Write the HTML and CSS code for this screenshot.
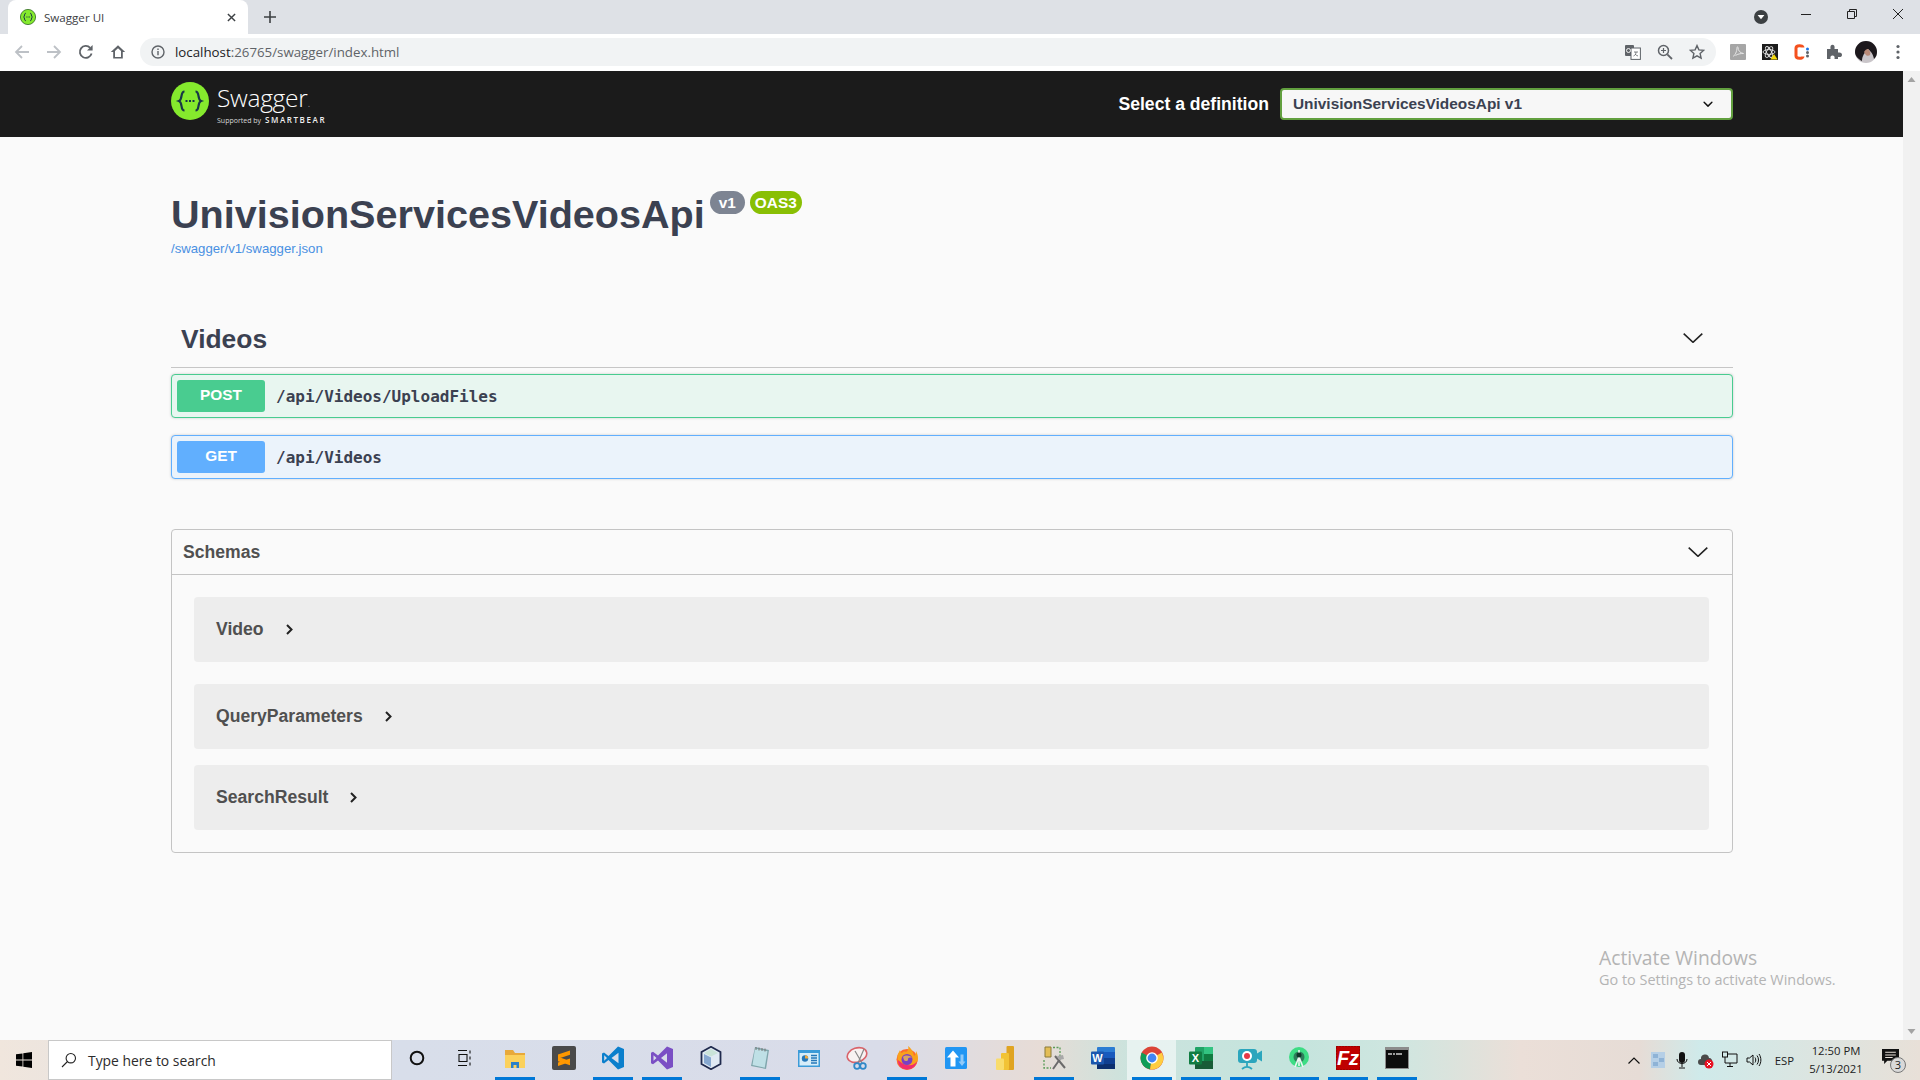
FILE: index.html
```html
<!DOCTYPE html>
<html lang="en">

<head>
    <meta charset="UTF-8">
    <title>Swagger UI</title>
    <link rel="stylesheet" href="styles.css">
</head>

<body>
    <!-- browser tabs -->
    <div class="tab-strip">
        <div class="tab">
            <svg class="tab-icon" viewBox="0 0 16 16">
                <circle cx="8" cy="8" r="7.6" fill="#85ea2d" stroke="#2f6b1e" stroke-width=".8" />
                <path d="M5.8 4.2C4 4.2 5 7.4 3.6 8 5 8.6 4 11.8 5.8 11.8M10.2 4.2C12 4.2 11 7.4 12.4 8 11 8.6 12 11.8 10.2 11.8" fill="none" stroke="#173647" stroke-width="1" />
                <path d="M6.4 8h.8M7.7 8h.8M9 8h.8" stroke="#173647" stroke-width="1" />
            </svg>
            <span class="tab-title">Swagger UI</span>
            <svg class="tab-close" viewBox="0 0 10 10"><path d="M1 1l8 8M9 1l-8 8" stroke="#3c4043" stroke-width="1.6" /></svg>
        </div>
        <svg class="new-tab" viewBox="0 0 12 12"><path d="M6 0v12M0 6h12" stroke="#3c4043" stroke-width="1.6" /></svg>
        <div class="window-controls">
            <span class="profile-menu"><svg viewBox="0 0 14 14"><circle cx="7" cy="7" r="7" fill="#3c4043" /><path d="M3.6 5h6.8L7 9.2z" fill="#fff" /></svg></span>
            <svg class="win-btn" viewBox="0 0 12 12"><path d="M1 6.5h10" stroke="#222" /></svg>
            <svg class="win-btn" viewBox="0 0 12 12"><path d="M1.5 3.5h7v7h-7zM3.5 3.5v-2h7v7h-2" fill="none" stroke="#222" /></svg>
            <svg class="win-btn" viewBox="0 0 12 12"><path d="M1 1l10 10M11 1L1 11" stroke="#222" /></svg>
        </div>
    </div>

    <!-- browser toolbar -->
    <div class="toolbar">
        <svg class="tool-icon" viewBox="0 0 16 16"><path d="M15 8H2M8 2L2 8l6 6" fill="none" stroke="#bdc1c6" stroke-width="1.8" /></svg>
        <svg class="tool-icon" viewBox="0 0 16 16"><path d="M1 8h13M8 2l6 6-6 6" fill="none" stroke="#bdc1c6" stroke-width="1.8" /></svg>
        <svg class="tool-icon" viewBox="0 0 16 16"><path d="M13.6 9.6A6 6 0 1 1 12.2 3.8" fill="none" stroke="#5f6368" stroke-width="1.8" /><path d="M14.6 1v5.6H9z" fill="#5f6368" /></svg>
        <svg class="tool-icon" viewBox="0 0 16 16"><path d="M8 1.2L.8 8h2.4v6.6h9.6V8h2.4zM5 13V7l3-2.8L11 7v6z" fill="#5f6368" /></svg>
        <div class="omnibox">
            <svg class="omni-info" viewBox="0 0 14 14"><circle cx="7" cy="7" r="6" fill="none" stroke="#5f6368" stroke-width="1.4" /><path d="M7 6v4.2M7 3.6v1.4" stroke="#5f6368" stroke-width="1.4" /></svg>
            <span class="url"><span class="url-host">localhost</span>:26765/swagger/index.html</span>
            <div class="omni-actions">
                <svg class="omni-icon" viewBox="0 0 16 16"><rect x="0" y="1" width="9" height="11" rx="1" fill="#5f6368" /><rect x="6" y="4" width="9.4" height="11.4" fill="#fff" stroke="#5f6368" /><path d="M9 8h4M11 8c0 2-1 3.500-2.500 4M10 10c.8 1 1.700 1.600 3 2" stroke="#5f6368" fill="none" stroke-width=".8" /><circle cx="3.500" cy="6.500" r="2" fill="none" stroke="#fff" stroke-width=".9" /></svg>
                <svg class="omni-icon" viewBox="0 0 16 16"><circle cx="6.500" cy="6.500" r="5" fill="none" stroke="#5f6368" stroke-width="1.500" /><path d="M10.300 10.300l4.700 4.700" stroke="#5f6368" stroke-width="1.800" /><path d="M4 6.500h5M6.500 4v5" stroke="#5f6368" stroke-width="1.200" /></svg>
                <svg class="omni-icon" viewBox="0 0 16 16"><path d="M8 1.600l1.900 4.300 4.700.5-3.500 3.100 1 4.600L8 11.800l-4.100 2.300 1-4.600L1.400 6.400l4.700-.5z" fill="none" stroke="#5f6368" stroke-width="1.400" /></svg>
            </div>
        </div>
        <div class="extensions">
            <svg class="ext-icon" viewBox="0 0 16 16"><rect width="16" height="16" rx="1" fill="#a6a6a6" /><path d="M3 12.500c2-1 4-5 4-9 0-1 1-1 1 0 0 3 2 5.500 5.500 6-3 0-6 .5-8 2" fill="none" stroke="#e6e6e6" stroke-width="1" /></svg>
            <svg class="ext-icon" viewBox="0 0 16 16"><rect width="16" height="16" fill="#1c1c1c" /><g fill="none" stroke="#e8e8e8" stroke-width=".9"><ellipse cx="7" cy="8" rx="6" ry="2.400" /><ellipse cx="7" cy="8" rx="6" ry="2.400" transform="rotate(60 7 8)" /><ellipse cx="7" cy="8" rx="6" ry="2.400" transform="rotate(120 7 8)" /></g><path d="M12 10l3.600 5.600H8.400z" fill="#f5d90a" /></svg>
            <svg class="ext-icon" viewBox="0 0 16 16"><path d="M9 3.500C9 1 2 1 2 4v8c0 3 7 3 7 .5" fill="none" stroke="#f4511e" stroke-width="3" /><circle cx="13.500" cy="5" r="1.500" fill="#1a73e8" /><circle cx="13.500" cy="8.500" r="1.500" fill="#5f6368" /><circle cx="13.500" cy="12" r="1.500" fill="#5f6368" /></svg>
            <svg class="ext-icon" viewBox="0 0 16 16"><path d="M1 5h3.500C4 2 5 .8 6.500.8S9 2 8.500 5H12v3.500c3-.5 4 .8 4 2.200s-1 2.800-4 2.300V15H8.500c.5-2.500-.5-3.500-2-3.500s-2.500 1-2 3.500H1z" fill="#5f6368" /></svg>
            <svg class="ext-avatar" viewBox="0 0 22 22"><circle cx="11" cy="11" r="11" fill="#c9c5c9" /><path d="M0 11A11 11 0 0 1 22 11c0 3-1 5-3 7-1-6-4-8-6-10-2 3-4 4-5 7-1 2-1 4-1 5-4-2-7-5-7-9z" fill="#1c181c" /><path d="M9 11c2-3 3-3 4-3 2 2 3 4 2 6-1 1-4 2-6-3z" fill="#b98a78" /></svg>
            <svg class="ext-menu" viewBox="0 0 4 16"><circle cx="2" cy="2.500" r="1.600" fill="#5f6368" /><circle cx="2" cy="8" r="1.600" fill="#5f6368" /><circle cx="2" cy="13.500" r="1.600" fill="#5f6368" /></svg>
        </div>
    </div>

    <div class="viewport">
        <main class="page">
            <!-- swagger header -->
            <header class="topbar">
                <div class="brand">
                    <svg class="brand-mark" viewBox="0 0 38 38">
                        <circle cx="19" cy="19" r="19" fill="#85ea2d" />
                        <path d="M13.500 9.500C9 9.500 12 17.500 8 19c4 1.500 1 9.500 5.500 9.500M24.500 9.500C29 9.500 26 17.500 30 19c-4 1.500-1 9.500-5.500 9.500" fill="none" stroke="#173647" stroke-width="2.200" />
                        <path d="M14.500 19h2M18 19h2M21.500 19h2" stroke="#173647" stroke-width="2" />
                    </svg>
                    <div class="brand-text">
                        <span class="brand-name">Swagger<span class="brand-dot">.</span></span>
                        <span class="brand-sub">Supported by <b>SMARTBEAR</b></span>
                    </div>
                </div>
                <div class="definition">
                    <span class="definition-label">Select a definition</span>
                    <div class="definition-select">
                        <span>UnivisionServicesVideosApi v1</span>
                        <svg class="select-arrow" viewBox="0 0 20 20"><path d="M13.418 7.859a.695.695 0 0 1 .978 0 .68.68 0 0 1 0 .969l-3.908 3.83a.697.697 0 0 1-.979 0l-3.908-3.83a.68.68 0 0 1 0-.969.695.695 0 0 1 .978 0L10 11z" fill="#111" /></svg>
                    </div>
                </div>
            </header>

            <div class="wrapper">
                <section class="info">
                    <div class="title-row">
                        <h1 class="title">UnivisionServicesVideosApi</h1>
                        <span class="badge badge-version">v1</span>
                        <span class="badge badge-oas">OAS3</span>
                    </div>
                    <a class="spec-link" href="#">/swagger/v1/swagger.json</a>
                </section>

                <section class="tag">
                    <div class="tag-head">
                        <h3>Videos</h3>
                        <svg class="tag-arrow" viewBox="0 0 20 10"><path d="M.7.700L10 9.300 19.300.700" fill="none" stroke="#222" stroke-width="1.600" /></svg>
                    </div>
                    <div class="opblock opblock-post">
                        <span class="method method-post">POST</span>
                        <span class="path">/api/Videos/UploadFiles</span>
                    </div>
                    <div class="opblock opblock-get">
                        <span class="method method-get">GET</span>
                        <span class="path">/api/Videos</span>
                    </div>
                </section>

                <section class="schemas">
                    <div class="schemas-head">
                        <h4>Schemas</h4>
                        <svg class="schemas-arrow" viewBox="0 0 20 10"><path d="M.7.700L10 9.300 19.300.700" fill="none" stroke="#222" stroke-width="1.600" /></svg>
                    </div>
                    <div class="models">
                        <div class="model model-first">
                            <span>Video</span>
                            <svg class="model-arrow" viewBox="0 0 7 11"><path d="M1 1l4.500 4.500L1 10" fill="none" stroke="#222" stroke-width="2" /></svg>
                        </div>
                        <div class="model">
                            <span>QueryParameters</span>
                            <svg class="model-arrow" viewBox="0 0 7 11"><path d="M1 1l4.500 4.500L1 10" fill="none" stroke="#222" stroke-width="2" /></svg>
                        </div>
                        <div class="model">
                            <span>SearchResult</span>
                            <svg class="model-arrow" viewBox="0 0 7 11"><path d="M1 1l4.500 4.500L1 10" fill="none" stroke="#222" stroke-width="2" /></svg>
                        </div>
                    </div>
                </section>
            </div>

            <div class="watermark">
                <div class="watermark-title">Activate Windows</div>
                <div class="watermark-sub">Go to Settings to activate Windows.</div>
            </div>
        </main>
        <div class="scrollbar">
            <svg viewBox="0 0 17 17"><path d="M4.500 11L8.500 6l4 5z" fill="#a3a3a3" /></svg>
            <svg viewBox="0 0 17 17"><path d="M4.500 6l4 5 4-5z" fill="#a3a3a3" /></svg>
        </div>
    </div>

    <!-- windows taskbar -->
    <footer class="taskbar">
        <div class="start">
            <svg viewBox="0 0 16 16"><path d="M0 2.300l6.500-.9v6.200H0zM7.300 1.300L16 0v7.600H7.300zM0 8.400h6.500v6.200L0 13.700zM7.300 8.400H16V16l-8.700-1.300z" fill="#000" /></svg>
        </div>
        <div class="search">
            <svg viewBox="0 0 16 16"><circle cx="9.800" cy="6.200" r="4.700" fill="none" stroke="#222" stroke-width="1.100" /><path d="M6.500 9.500L1 15" stroke="#222" stroke-width="1.100" /></svg>
            <span>Type here to search</span>
        </div>
        <div class="task-btn"><svg class="task-small" viewBox="0 0 16 16"><circle cx="8" cy="8" r="6.300" fill="none" stroke="#111" stroke-width="2" /></svg></div>
        <div class="task-btn"><svg class="task-small task-view" viewBox="0 0 16 16"><path d="M2 .500h9M2 15.500h9M3 4.500h8v7H3zM14 .500v3M14 6.500v3M14 12.500v3" fill="none" stroke="#111" stroke-width="1.100" /></svg></div>
        <div class="task-btn is-running"><svg viewBox="0 0 24 24"><path d="M2 4h8l2 3h10v5H2z" fill="#e8a93a" /><path d="M2 9h20v13H2z" fill="#fbd15c" /><path d="M8 22v-6h8v6h-2.500v-3h-3v3z" fill="#2a80c8" /></svg></div>
        <div class="task-btn"><svg viewBox="0 0 24 24"><rect x="0" y="0" width="24" height="24" rx="2" fill="#4a4a4a" /><path d="M18 4.500L6 8.500v4.200l12-3.900zM6 15.200l12 4v-4.300L6 10.800zM18 12.500L6 16.500v3.500l12-4z" fill="#ff9800" /></svg></div>
        <div class="task-btn is-running"><svg viewBox="0 0 24 24"><path d="M17 .500L7.500 10 3 6.500 1 7.500v9l2 1 4.500-3.500L17 23.500l6-2.500V3zM17.500 6.800v10.400L10.500 12zM3.200 9.300L6 12l-2.800 2.700z" fill="#0b7fcc" /></svg></div>
        <div class="task-btn is-running"><svg viewBox="0 0 24 24"><path d="M17 .500L8 9.500 3 5.800 1 6.800v10.400l2 1 5-3.700 9 9 6-2.500V3zM17 7.200v9.600L11 12zM3.500 9.200L6.500 12l-3 2.800z" fill="#7a4fc4" /></svg></div>
        <div class="task-btn"><svg viewBox="0 0 24 24"><path d="M12 .800L21.500 6v12L12 23.200 2.500 18V6z" fill="#dfe9f3" stroke="#1f2a4d" stroke-width="1.800" /><path d="M5 8l7 3.500V21l-7-4z" fill="#86a8d0" /><path d="M12 3l7 4-7 3.500L5 7z" fill="#c9e3d8" /></svg></div>
        <div class="task-btn is-running"><svg viewBox="0 0 24 24"><path d="M7 1l14 3-3 19-15-3z" fill="#7fa6ac" /><path d="M7 2.500l12.500 2.700-2.800 16.500L4.500 19z" fill="#bfe0e6" /><path d="M8 1v3M11 1.500v3M14 2v3M17 2.500v3" stroke="#777" /></svg></div>
        <div class="task-btn"><svg viewBox="0 0 24 24"><rect x="1" y="4" width="22" height="17" fill="#3b9bd8" /><rect x="2.500" y="7" width="19" height="12.500" fill="#d6edf9" /><circle cx="8" cy="12.500" r="3.200" fill="#2577b8" /><path d="M14 9.500h6M14 12h6M14 14.500h6M14 17h6" stroke="#2577b8" stroke-width="1.300" /><path d="M8 12.500V9.300a3.200 3.200 0 0 1 3.200 3.200z" fill="#f2a93b" /></svg></div>
        <div class="task-btn"><svg viewBox="0 0 24 24"><ellipse cx="11" cy="9" rx="10" ry="7" fill="#f7f2f2" stroke="#d9636a" stroke-width="1.600" transform="rotate(-18 11 9)" /><path d="M9 5l7 12M18 3l-6 14" stroke="#888" stroke-width="1.200" /><circle cx="17" cy="20" r="2.800" fill="none" stroke="#2f88c8" stroke-width="1.800" /><circle cx="11" cy="20" r="2.800" fill="none" stroke="#2f88c8" stroke-width="1.800" /></svg></div>
        <div class="task-btn is-running"><svg viewBox="0 0 24 24"><circle cx="12" cy="13.500" r="10.500" fill="#ff6a2c" /><path d="M3 8c-2 7 2 14 9 15 7 0 11-5 11-11 0-3-1-5-2-7 0 3-1 4-2 5-1-5-3-8-6-10 1 3 0 5-2 6-2-1-3 0-4 1C6 7 5 6 5 4z" fill="#f9a11b" /><path d="M3 14c0 6 4 9.500 9 9.500s9-3 10.500-9c-3 5-10 8-19.500-.5z" fill="#f22d6e" /><circle cx="12" cy="13.500" r="5.500" fill="#7b3fc4" /><path d="M8 11c2-2 7-2 9 1-3-1-4 0-4 1.500 0 2-3 2-4 .5z" fill="#ffce3a" opacity=".7" /></svg></div>
        <div class="task-btn"><svg viewBox="0 0 24 24"><rect x="1" y="1" width="22" height="22" rx="1.500" fill="#2196f3" /><path d="M9 4.500l6 7h-3.500v9h-5v-9H3z" fill="#fff" /><path d="M18 20l-3.500-4.500h2v-7h3v7h2z" fill="#90caf9" /></svg></div>
        <div class="task-btn"><svg viewBox="0 0 24 24"><rect x="13.500" y="0" width="7.500" height="24" rx="1" fill="#e0a422" /><rect x="8" y="7" width="8" height="17" rx="1" fill="#f2c335" /><rect x="3" y="12.500" width="8" height="11.500" rx="1" fill="#f9dc6b" /></svg></div>
        <div class="task-btn is-running"><svg viewBox="0 0 24 24"><path d="M3 1h6v10H3z" fill="#e3bd56" stroke="#8a7a3a" /><path d="M11 1.500h7v9" fill="none" stroke="#5a9c58" stroke-width="1.300" stroke-dasharray="2 1.500" /><path d="M2 14v8h7" fill="none" stroke="#5a9c58" stroke-width="1.300" stroke-dasharray="2 1.500" /><path d="M11 23l7-10M13 10l10 12" stroke="#6b6b6b" stroke-width="2" /><path d="M15 10l6-1 1 4-5 1z" fill="#a8a8a8" /></svg></div>
        <div class="task-btn"><svg viewBox="0 0 24 24"><rect x="6" y="1" width="18" height="22" rx="1" fill="#2b7cd3" /><rect x="6" y="6" width="18" height="6" fill="#185abd" /><rect x="6" y="12" width="18" height="6" fill="#103f91" /><rect x="6" y="18" width="18" height="5" fill="#0c2f6e" /><rect x="0" y="5.500" width="13" height="13" rx="1" fill="#1a56ad" /><text class="icon-letter" x="6.500" y="16" text-anchor="middle" font-size="11">W</text></svg></div>
        <div class="task-btn is-active"><svg viewBox="0 0 24 24"><circle cx="12" cy="12" r="11.500" fill="#db4437" /><path d="M12 12L1.500 6.500 .500 12A11.500 11.500 0 0 0 10 23.300z" fill="#0f9d58" /><path d="M12 12l-2 11.300A11.500 11.500 0 0 0 23.500 12L22 6.500z" fill="#ffcd40" /><circle cx="12" cy="12" r="5.800" fill="#fff" /><circle cx="12" cy="12" r="4.400" fill="#4285f4" /></svg></div>
        <div class="task-btn is-running"><svg viewBox="0 0 24 24"><rect x="6" y="1" width="18" height="22" rx="1" fill="#21a366" /><rect x="15" y="1" width="9" height="7" fill="#33c481" /><rect x="15" y="8" width="9" height="7" fill="#107c41" /><rect x="6" y="15" width="18" height="8" fill="#185c37" /><rect x="0" y="5.500" width="13" height="13" rx="1" fill="#107c41" /><text class="icon-letter" x="6.500" y="16" text-anchor="middle" font-size="11">X</text></svg></div>
        <div class="task-btn is-running"><svg viewBox="0 0 24 24"><rect x="0" y="3" width="19" height="14" rx="3" fill="#2ba6bd" /><path d="M19 7.500l5-3v11l-5-3z" fill="#2ba6bd" /><circle cx="9" cy="10" r="5" fill="#fff" /><circle cx="9" cy="10" r="3" fill="#e63946" /><path d="M9 17v4M4 23c3-2.500 7-2.500 10 0" fill="none" stroke="#2ba6bd" stroke-width="1.800" /></svg></div>
        <div class="task-btn is-running"><svg viewBox="0 0 24 24"><circle cx="12" cy="11" r="10" fill="#3ddc84" /><circle cx="12" cy="11" r="5.500" fill="#2e7d5b" /><path d="M12 4v16M8 21l4-10 4 10" fill="none" stroke="#eaf7f1" stroke-width="1.600" /><circle cx="12" cy="9" r="2.500" fill="#10362a" /></svg></div>
        <div class="task-btn is-running"><svg viewBox="0 0 24 24"><rect width="24" height="24" fill="#bf0000" stroke="#7a0000" stroke-dasharray="2 1" /><text class="icon-letter icon-fz" x="12" y="19" text-anchor="middle" font-size="20">Fz</text></svg></div>
        <div class="task-btn is-running"><svg viewBox="0 0 24 24"><rect y="1" width="24" height="22" fill="#8c8c8c" /><rect x="1" y="4" width="22" height="18" fill="#0c0c0c" /><path d="M3 8h4M8 8h2M11 8h6" stroke="#ccc" stroke-width="1.300" /></svg></div>

        <div class="tray">
            <svg class="tray-chevron" viewBox="0 0 12 7"><path d="M.5 6.500L6 1l5.500 5.500" fill="none" stroke="#111" stroke-width="1.200" /></svg>
            <svg class="tray-icon" viewBox="0 0 16 18"><rect x="1" y="1" width="14" height="16" fill="#b5cfe6" /><path d="M3 3h5v4H3zM9 7h5v4H9zM3 11h5v4H3z" fill="#8fb3d6" /></svg>
            <svg class="tray-icon" viewBox="0 0 16 18"><rect x="5" y="1" width="6" height="11" rx="3" fill="#111" /><path d="M3 8c0 6 10 6 10 0M8 13v3M5 17h6" fill="none" stroke="#111" /></svg>
            <svg class="tray-icon" viewBox="0 0 16 18"><path d="M3 14a3 3 0 0 1 0-6 4 4 0 0 1 8-1 3 3 0 0 1 3 4v3z" fill="#4a4a4a" /><circle cx="11" cy="13" r="4.500" fill="#e81123" /><path d="M9 11l4 4M13 11l-4 4" stroke="#fff" /></svg>
            <svg class="tray-icon" viewBox="0 0 16 18"><path d="M5 3h10v9H3V6M8 12v3M5 15.500h6" fill="none" stroke="#111" /><rect x=".5" y="1" width="5" height="5" fill="none" stroke="#111" /></svg>
            <svg class="tray-icon" viewBox="0 0 16 18"><path d="M1 7v4h2.500L7 14V4L3.500 7z" fill="none" stroke="#111" /><path d="M9 6.500c1 1.500 1 3.500 0 5M11 4.500c2 2.500 2 6.500 0 9M13 3c2.500 3.500 2.500 8.500 0 12" fill="none" stroke="#111" /></svg>
            <span class="tray-lang">ESP</span>
            <div class="clock">
                <span>12:50 PM</span>
                <span>5/13/2021</span>
            </div>
            <div class="notify">
                <svg viewBox="0 0 16 16"><path d="M0 1h16v11H5l-3 3v-3H0z" fill="#111" /><path d="M3 4h10M3 6.500h10M3 9h7" stroke="#e8e0d8" /></svg>
                <span class="notify-count">3</span>
            </div>
        </div>
    </footer>
</body>

</html>
```

FILE: styles.css
```css
* {
    box-sizing: border-box;
    margin: 0;
    padding: 0;
}

body {
    height: 100vh;
    display: flex;
    flex-direction: column;
    overflow: hidden;
    font-family: "Liberation Sans", Arial, sans-serif;
    color: #3b4151;
}

/* browser tabs */
.tab-strip {
    height: 34px;
    display: flex;
    align-items: center;
    padding-left: 8px;
    background-color: #dee1e6;
}

.tab {
    width: 240px;
    height: 34px;
    display: flex;
    align-items: center;
    padding: 0 12px;
    background-color: #fff;
    border-radius: 8px 8px 0 0;
}

.tab-icon {
    width: 16px;
    height: 16px;
    margin-right: 8px;
}

.tab-title {
    flex: 1;
    font-family: "Open Sans", sans-serif;
    font-size: 11.600px;
    color: #3c4043;
}

.tab-close {
    width: 9px;
    height: 9px;
}

.new-tab {
    width: 12px;
    height: 12px;
    margin-left: 16px;
}

.window-controls {
    margin-left: auto;
    display: flex;
    align-items: center;
}

.profile-menu {
    width: 14px;
    height: 14px;
    margin-right: 32px;
    display: flex;
}

.win-btn {
    width: 12px;
    height: 12px;
    margin-right: 34px;
    margin-bottom: 6px;
}

.win-btn:last-child {
    margin-right: 16px;
}

/* browser toolbar */
.toolbar {
    height: 37px;
    display: flex;
    align-items: center;
    padding: 0 0 1px 14px;
    background-color: #fff;
}

.tool-icon {
    width: 16px;
    height: 16px;
    margin-right: 16px;
}

.omnibox {
    width: 1576px;
    height: 28px;
    margin-left: -2px;
    display: flex;
    align-items: center;
    padding: 0 11px 0 11px;
    background-color: #f1f3f4;
    border-radius: 14px;
}

.omni-info {
    width: 14px;
    height: 14px;
    margin-right: 10px;
}

.url {
    flex: 1;
    font-family: "Open Sans", sans-serif;
    font-size: 13.300px;
    color: #5f6368;
}

.url-host {
    color: #202124;
}

.omni-actions {
    display: flex;
    gap: 16px;
}

.omni-icon {
    width: 16px;
    height: 16px;
}

.extensions {
    flex: 1;
    display: flex;
    align-items: center;
    padding-left: 14px;
}

.ext-icon {
    width: 16px;
    height: 16px;
    margin-right: 16px;
}

.ext-avatar {
    width: 22px;
    height: 22px;
    margin-left: -3px;
    margin-right: 19px;
}

.ext-menu {
    width: 4px;
    height: 16px;
}

/* page */
.viewport {
    flex: 1;
    min-height: 0;
    display: flex;
}

.page {
    position: relative;
    flex: 1;
    background-color: #fafafa;
}

.scrollbar {
    width: 17px;
    display: flex;
    flex-direction: column;
    justify-content: space-between;
    background-color: #f1f1f1;
}

.scrollbar svg {
    width: 17px;
    height: 17px;
}

/* swagger header */
.topbar {
    height: 66px;
    display: flex;
    align-items: center;
    justify-content: space-between;
    padding: 0 170px 0 171px;
    background-color: #1b1b1b;
}

.brand {
    display: flex;
    align-items: center;
}

.brand-mark {
    width: 38px;
    height: 38px;
    margin-right: 8px;
    margin-bottom: 6px;
}

.brand-text {
    display: flex;
    flex-direction: column;
    margin-top: 2px;
    color: #fff;
}

.brand-name {
    font-family: "Open Sans", sans-serif;
    font-weight: 300;
    font-size: 24.500px;
    line-height: 28px;
    letter-spacing: -.3px;
}

.brand-dot {
    font-size: 12px;
    color: #999;
}

.brand-sub {
    margin-top: -2px;
    font-family: "Open Sans", sans-serif;
    font-size: 7px;
    line-height: 10px;
    color: #d8d8d8;
}

.brand-sub b {
    margin-left: 2px;
    font-size: 8px;
    font-weight: 600;
    letter-spacing: 1.600px;
    color: #eee;
}

.definition {
    display: flex;
    align-items: center;
}

.definition-label {
    margin-right: 11px;
    font-size: 17.600px;
    font-weight: 700;
    color: #fff;
}

.definition-select {
    width: 453px;
    height: 32px;
    display: flex;
    align-items: center;
    justify-content: space-between;
    padding: 0 13px 0 11px;
    font-size: 15.400px;
    font-weight: 700;
    color: #3b4151;
    background-color: #f7f7f7;
    border: 2px solid #62a03f;
    border-radius: 4px;
}

.select-arrow {
    width: 20px;
    height: 20px;
}

.wrapper {
    padding: 0 170px 0 171px;
}

/* api title */
.info {
    padding-top: 54px;
}

.title-row {
    display: flex;
    align-items: flex-start;
}

.title {
    font-size: 39.600px;
    line-height: 46px;
    font-weight: 700;
}

.badge {
    height: 23px;
    margin-left: 5px;
    padding: 0 5px;
    font-size: 15.400px;
    line-height: 23px;
    font-weight: 700;
    color: #fff;
    border-radius: 12px;
}

.badge-version {
    width: 35px;
    padding-left: 9px;
    background-color: #7d8492;
}

.badge-oas {
    background-color: #89bf04;
}

.spec-link {
    display: block;
    margin-top: 4px;
    font-size: 13.200px;
    line-height: 16px;
    color: #4990e2;
    text-decoration: none;
}

/* videos tag */
.tag {
    margin-top: 55px;
}

.tag-head {
    height: 56px;
    display: flex;
    align-items: center;
    justify-content: space-between;
    padding: 0 30px 0 10px;
    border-bottom: 1px solid #c6c6c6;
}

.tag-head h3 {
    font-size: 26.400px;
    font-weight: 700;
}

.tag-arrow {
    width: 20px;
    height: 10px;
    margin-bottom: 3px;
}

.opblock {
    height: 44px;
    display: flex;
    align-items: center;
    padding-left: 5px;
    border-radius: 4px;
    box-shadow: 0 0 3px rgba(0, 0, 0, .19);
}

.opblock-post {
    margin-top: 6px;
    background-color: #e8f6f0;
    border: 1px solid #49cc90;
}

.opblock-get {
    margin-top: 17px;
    background-color: #ebf3fb;
    border: 1px solid #61affe;
}

.method {
    width: 88px;
    height: 32px;
    margin-right: 11px;
    text-align: center;
    font-size: 15.400px;
    line-height: 30px;
    font-weight: 700;
    color: #fff;
    border-radius: 3px;
}

.method-post {
    background-color: #49cc90;
}

.method-get {
    background-color: #61affe;
}

.path {
    font-family: "DejaVu Sans Mono", monospace;
    font-size: 16px;
    font-weight: 600;
    color: #3b4151;
}

/* schemas */
.schemas {
    margin-top: 50px;
    border: 1px solid #c4c4c4;
    border-radius: 4px;
}

.schemas-head {
    height: 45px;
    display: flex;
    align-items: center;
    justify-content: space-between;
    padding: 0 24px 0 11px;
    border-bottom: 1px solid #c4c4c4;
}

.schemas-head h4 {
    font-size: 17.600px;
    font-weight: 700;
    color: #505050;
}

.schemas-arrow {
    width: 20px;
    height: 10px;
}

.models {
    padding: 22px 23px 22px 22px;
}

.model {
    height: 65px;
    display: flex;
    align-items: center;
    margin-top: 16px;
    padding-left: 22px;
    font-size: 17.600px;
    font-weight: 700;
    color: #505050;
    background-color: #ededed;
    border-radius: 4px;
}

.model-first {
    margin-top: 0;
    margin-bottom: 22px;
}

.model-first + .model {
    margin-top: 0;
}

.model-arrow {
    width: 7px;
    height: 11px;
    margin-left: 22px;
}

/* windows watermark sits on top of the page */
.watermark {
    position: absolute;
    left: 1599px;
    top: 874px;
    color: #b4b4b4;
}

.watermark-title {
    font-family: "Open Sans", sans-serif;
    font-size: 19.300px;
    line-height: 26px;
}

.watermark-sub {
    font-family: "Open Sans", sans-serif;
    font-size: 14.450px;
    line-height: 18px;
}

/* windows taskbar */
.taskbar {
    height: 40px;
    display: flex;
    background: linear-gradient(90deg, #f0e6dd 0, #d8deea 400px, #d9dce9 880px, #e7dcd6 1040px, #cbe3dd 1130px, #c4e4dd 1290px, #cfe6e0 1400px, #ebdfd8 1520px, #e6dcd6 1640px, #cfeaea 1700px, #e8e0d8 1920px);
}

.start {
    width: 48px;
    display: flex;
    align-items: center;
    justify-content: center;
}

.start svg {
    width: 16px;
    height: 16px;
}

.search {
    width: 344px;
    display: flex;
    align-items: center;
    padding-left: 12px;
    font-family: "Open Sans", sans-serif;
    font-size: 13.900px;
    color: #2b2b2b;
    background-color: #fff;
    border: 1px solid #c8c8c8;
}

.search svg {
    width: 16px;
    height: 16px;
    margin-right: 11px;
}

.task-btn {
    width: 49px;
    display: flex;
    align-items: center;
    justify-content: center;
    padding-bottom: 4px;
}

.task-btn svg {
    width: 24px;
    height: 24px;
}

.task-btn .task-small {
    width: 16px;
    height: 16px;
}

.task-btn .task-view {
    margin-right: 3px;
}

/* the blue bar under a running app is narrower than its button */
.is-running {
    background: linear-gradient(#0078d7, #0078d7) center bottom / 40px 3px no-repeat;
}

.is-active {
    background: linear-gradient(#0078d7, #0078d7) center bottom / 40px 3px no-repeat, rgba(255, 255, 255, .55);
}

.icon-letter {
    font-family: "Liberation Sans", sans-serif;
    font-weight: 700;
    fill: #fff;
}

.icon-fz {
    font-style: italic;
}

.tray {
    flex: 1;
    display: flex;
    align-items: center;
    justify-content: flex-end;
    padding-right: 14px;
    font-family: "Open Sans", sans-serif;
    font-size: 11.300px;
    color: #222;
}

.tray-chevron {
    width: 12px;
    height: 7px;
    margin-right: 10px;
}

.tray-icon {
    width: 16px;
    height: 18px;
    margin-right: 8px;
}

.tray-lang {
    margin-left: 5px;
    margin-right: 13px;
}

.clock {
    width: 58px;
    display: flex;
    flex-direction: column;
    align-items: center;
    gap: 2px;
    line-height: 16px;
}

.notify {
    position: relative;
    width: 24px;
    height: 24px;
    margin-left: 17px;
}

.notify svg {
    width: 17px;
    height: 17px;
}

/* count badge on the notification icon */
.notify-count {
    position: absolute;
    right: 0;
    bottom: -1px;
    width: 16px;
    height: 16px;
    text-align: center;
    font-size: 11px;
    line-height: 14px;
    background-color: #d9d9d9;
    border: 1px solid #777;
    border-radius: 50%;
}
```
